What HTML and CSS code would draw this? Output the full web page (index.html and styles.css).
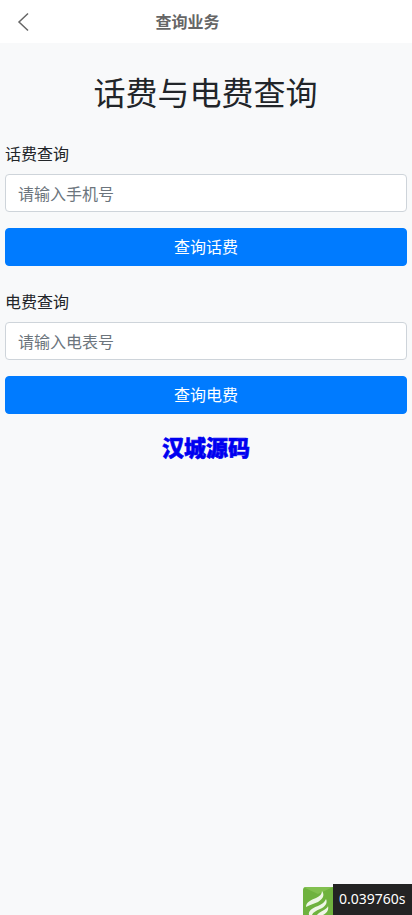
FILE: index.html
```html
<!DOCTYPE html>
<html lang="zh-CN">
<head>
<meta charset="utf-8">
<title>查询业务</title>
<link rel="stylesheet" href="styles.css">
</head>
<body>
<header class="topbar">
  <svg class="back" width="14" height="20" viewBox="0 0 14 20"><path d="M12 1.5 3 10l9 8.5" fill="none" stroke="#666" stroke-width="1.5"/></svg>
  <span class="topbar-title">查询业务</span>
</header>
<main class="page">
  <h1 class="title">话费与电费查询</h1>
  <form class="group">
    <label class="label">话费查询</label>
    <input class="input" type="text" placeholder="请输入手机号">
    <button class="btn" type="button">查询话费</button>
  </form>
  <form class="group">
    <label class="label">电费查询</label>
    <input class="input" type="text" placeholder="请输入电表号">
    <button class="btn" type="button">查询电费</button>
  </form>
  <p class="brand">汉城源码</p>
</main>
<div class="trace">
  <span class="trace-logo">
    <svg width="30" height="28" viewBox="0 0 30 28">
      <rect width="30" height="28" fill="#6fb23e"/>
      <path d="M0 0h30L15 7z" fill="#82c04f"/>
      <path d="M3 20c0-5 5-7 10-9 4-2 6-4 6-7 3 4 1 8-4 11-4 2-9 3-12 5z" fill="#eef6e6"/>
      <path d="M6 28c-1-4 3-7 9-9 4-2 7-4 8-7 2 4-1 8-6 10-4 2-7 3-8 6z" fill="#eef6e6"/>
      <path d="M14 28c1-2 4-3 7-5 2-1 4-3 4-4 1 4-1 7-5 9z" fill="#eef6e6"/>
    </svg>
  </span>
  <span class="trace-time">0.039760s</span>
</div>
</body>
</html>
```
FILE: styles.css
```css
* { box-sizing: border-box; }
html, body { height: 100%; }
body {
  margin: 0;
  background: #f8f9fa;
  color: #212529;
  font-family: "Noto Sans CJK SC", "Liberation Sans", sans-serif;
  font-size: 16px;
  line-height: 24px;
  overflow: hidden;
}
.topbar {
  height: 43px;
  background: #fff;
  display: flex;
  align-items: center;
  justify-content: center;
  position: relative;
  padding-right: 37px;
  padding-bottom: 1px;
}
.back { position: absolute; left: 16px; top: 12px; }
.topbar-title { font-size: 16px; font-weight: 700; color: #666; }
.page { padding: 0 5px; }
.title {
  margin: 29px 0 32px;
  padding-right: 1px;
  font-size: 32px;
  line-height: 38px;
  font-weight: 400;
  text-align: center;
}
.group { display: flex; flex-direction: column; margin: 0 0 24px; }
.label { margin-bottom: 10px; line-height: 22px; }
.input {
  height: 38px;
  padding: 6px 12px;
  margin-bottom: 16px;
  border: 1px solid #ced4da;
  border-radius: 4px;
  background: #fff;
  font: inherit;
  color: #495057;
}
.input::placeholder { color: #6c757d; opacity: 1; }
.btn {
  height: 38px;
  padding: 0 0 2px;
  border: 1px solid #007bff;
  border-radius: 4px;
  background: #007bff;
  color: #fff;
  font: inherit;
}
.brand {
  margin: -3px 0 0;
  text-align: center;
  font-size: 22px;
  line-height: 22px;
  font-weight: 900;
  color: #0000f0;
  -webkit-text-stroke: 0.6px #0000f0;
}
.trace {
  position: fixed;
  right: 0;
  bottom: 0;
  display: flex;
  align-items: flex-end;
}
.trace-logo { width: 30px; height: 28px; display: block; overflow: hidden; border-top-left-radius: 3px; }
.trace-logo svg { display: block; }
.trace-time {
  height: 31px;
  width: 79px;
  padding: 0 5px 0 6px;
  background: #232323;
  color: #fff;
  font-family: "Noto Sans", sans-serif;
  font-size: 14px;
  line-height: 29px;
}
```
